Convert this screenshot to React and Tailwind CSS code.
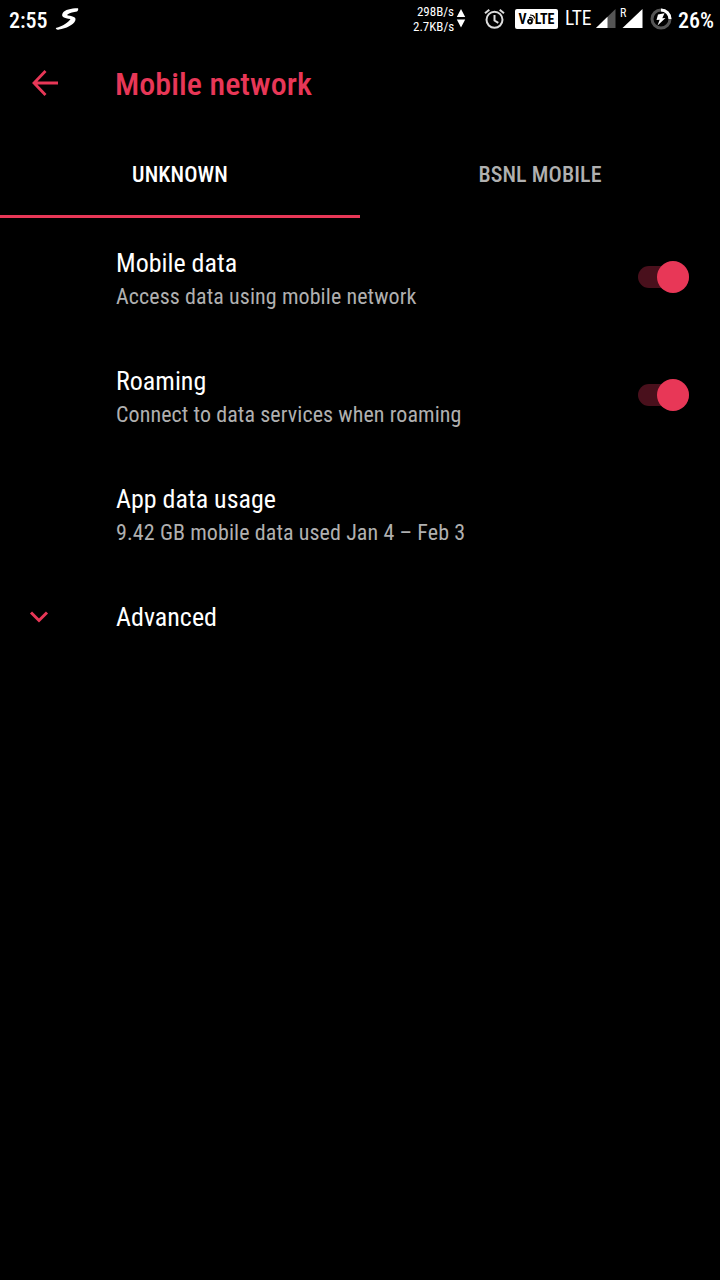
import React, { useState } from "react";

const rows = [
  { title: "Mobile data", sub: "Access data using mobile network", toggle: true },
  { title: "Roaming", sub: "Connect to data services when roaming", toggle: true },
  { title: "App data usage", sub: "9.42 GB mobile data used Jan 4 – Feb 3", toggle: false },
];

function StatusBar() {
  return (
    <header className="flex h-[38px] items-center text-white">
      <span className="ml-[9px] w-[39px] pt-[3px] text-[22px] font-medium whitespace-nowrap">2:55</span>
      <svg className="ml-[7px] h-[24px] w-[24px]" viewBox="0 0 24 24" fill="#fff">
        <path d="M23 1.300C17 1.200 9.500 2.500 7.500 6.500C6 10 9 11.300 15.500 12C13.500 15.500 8 19 .800 21C1 22.700 2.500 23 4 22.500C11 21.500 18.500 18 20.300 13.500C21.300 10.500 19 9.300 13 8.500C12 8.300 12 7.800 12.800 7.200C15 5.600 18.500 5 22 4.500C23.300 3.500 23.500 2.300 23 1.300z" />
      </svg>
      <div className="ml-auto w-[41px] text-right text-[13px] leading-[15px] whitespace-nowrap">
        <p>298B/s</p>
        <p>2.7KB/s</p>
      </div>
      <svg className="ml-[2px] h-[20px] w-[10px]" viewBox="0 0 10 20" fill="#fff">
        <path d="M5 0L9.200 8H.800zM.800 10.500h8.400L5 18.500z" />
      </svg>
      <svg className="ml-[18px] h-[22px] w-[22px]" viewBox="0 0 22 22" fill="none" stroke="#dcdcdc" strokeWidth="2">
        <circle cx="10.500" cy="11.800" r="8" />
        <path d="M10.500 7v5.500l3.800 2.300M1 5.300L5.300 1.700M20 5.300L15.700 1.700" />
      </svg>
      <div className="ml-[9px] flex h-5 w-[43px] items-center justify-center rounded-[2px] bg-white text-[14px] font-bold text-black">
        <span>V</span>
        <svg className="h-3 w-2" viewBox="0 0 8 12" fill="none" stroke="#000" strokeWidth="1.800">
          <circle cx="3" cy="8.500" r="2" />
          <path d="M2 4.500c2.500-.5 4 1 4 3M3 2c3 0 4.500 1.500 4.500 3.500" strokeWidth="1.100" />
        </svg>
        <span>LTE</span>
      </div>
      <span className="ml-[7px] w-[28px] text-[19.5px]">LTE</span>
      <svg className="ml-[3px] h-5 w-5" viewBox="0 0 20 20">
        <path d="M19.500 0v19H0z" fill="#555" />
        <path d="M11.500 7.800V19H0z" fill="#fff" />
      </svg>
      <div className="ml-[4px] flex h-[22px] w-[23px]">
        <span className="-mt-[1px] w-0 text-[12px] leading-3">R</span>
        <svg className="h-[22px] w-[23px] shrink-0" viewBox="0 0 23 22" fill="#fff">
          <path d="M22.500 1v19H2.500z" />
        </svg>
      </div>
      <svg className="ml-[7px] h-[22px] w-[22px]" viewBox="0 0 22 22">
        <circle cx="11" cy="11" r="9" fill="none" stroke="#555" strokeWidth="3" />
        <path d="M11 2a9 9 0 0 1 9 9" fill="none" stroke="#fff" strokeWidth="3" />
        <path d="M14.500 5.200L8 6.500L6.500 12l3.200-.3L7.500 17.500L15.500 10l-3.200.2z" fill="#fff" />
      </svg>
      <span className="mr-[7px] ml-[6px] w-[35px] pt-[3px] text-[22px] font-medium whitespace-nowrap">26%</span>
    </header>
  );
}

function Toggle() {
  const [on, setOn] = useState(true);
  return (
    <button onClick={() => setOn(!on)} className={`flex h-[22px] w-[51px] items-center rounded-full ${on ? "justify-end bg-[#49101c]" : "justify-start bg-neutral-700"}`}>
      <span className="h-8 w-8 shrink-0 rounded-full bg-[#e83757]"></span>
    </button>
  );
}

function App() {
  return (
    <div className="min-h-[1280px] w-[720px] overflow-hidden bg-black font-['Roboto_Condensed','Roboto',sans-serif] text-white font-stretch-condensed">
      <StatusBar />

      {/* Title bar */}
      <div className="flex h-[90px] items-center text-[#e83757]">
        <svg className="ml-8 h-[26px] w-[26px]" viewBox="0 0 26 26" fill="none" stroke="currentColor" strokeWidth="2.800">
          <path d="M26 13H2M13.500 1L2 13l11.500 12" />
        </svg>
        <h1 className="ml-[57px] pt-[2px] text-[32px] font-medium tracking-[0.06px]">Mobile network</h1>
      </div>

      {/* SIM tabs */}
      <div className="flex h-[90px] text-[22px] font-medium tracking-[0.1px]">
        <div className="flex w-1/2 items-center justify-center border-b-[3px] border-[#e83757] pt-[6px]">UNKNOWN</div>
        <div className="flex w-1/2 items-center justify-center border-b-[3px] border-black pt-[6px] text-[#b0b0b0]">BSNL MOBILE</div>
      </div>

      {rows.map((row) => (
        <div key={row.title} className="flex h-[118px] items-center justify-between pr-[31px] pl-[116px]">
          <div className="pt-[5px]">
            <p className="text-[26px] leading-[34px]">{row.title}</p>
            <p className="text-[22px] leading-[33px] tracking-[0.09px] text-[#b0b0b0]">{row.sub}</p>
          </div>
          {row.toggle && <Toggle />}
        </div>
      ))}

      <div className="flex h-[90px] items-center">
        <svg className="ml-[29px] h-5 w-5" viewBox="0 0 20 20" fill="none" stroke="#e83757" strokeWidth="3">
          <path d="M2 5.500l8 8 8-8" />
        </svg>
        <p className="ml-[67px] text-[26px]">Advanced</p>
      </div>
    </div>
  );
}

export default App;
